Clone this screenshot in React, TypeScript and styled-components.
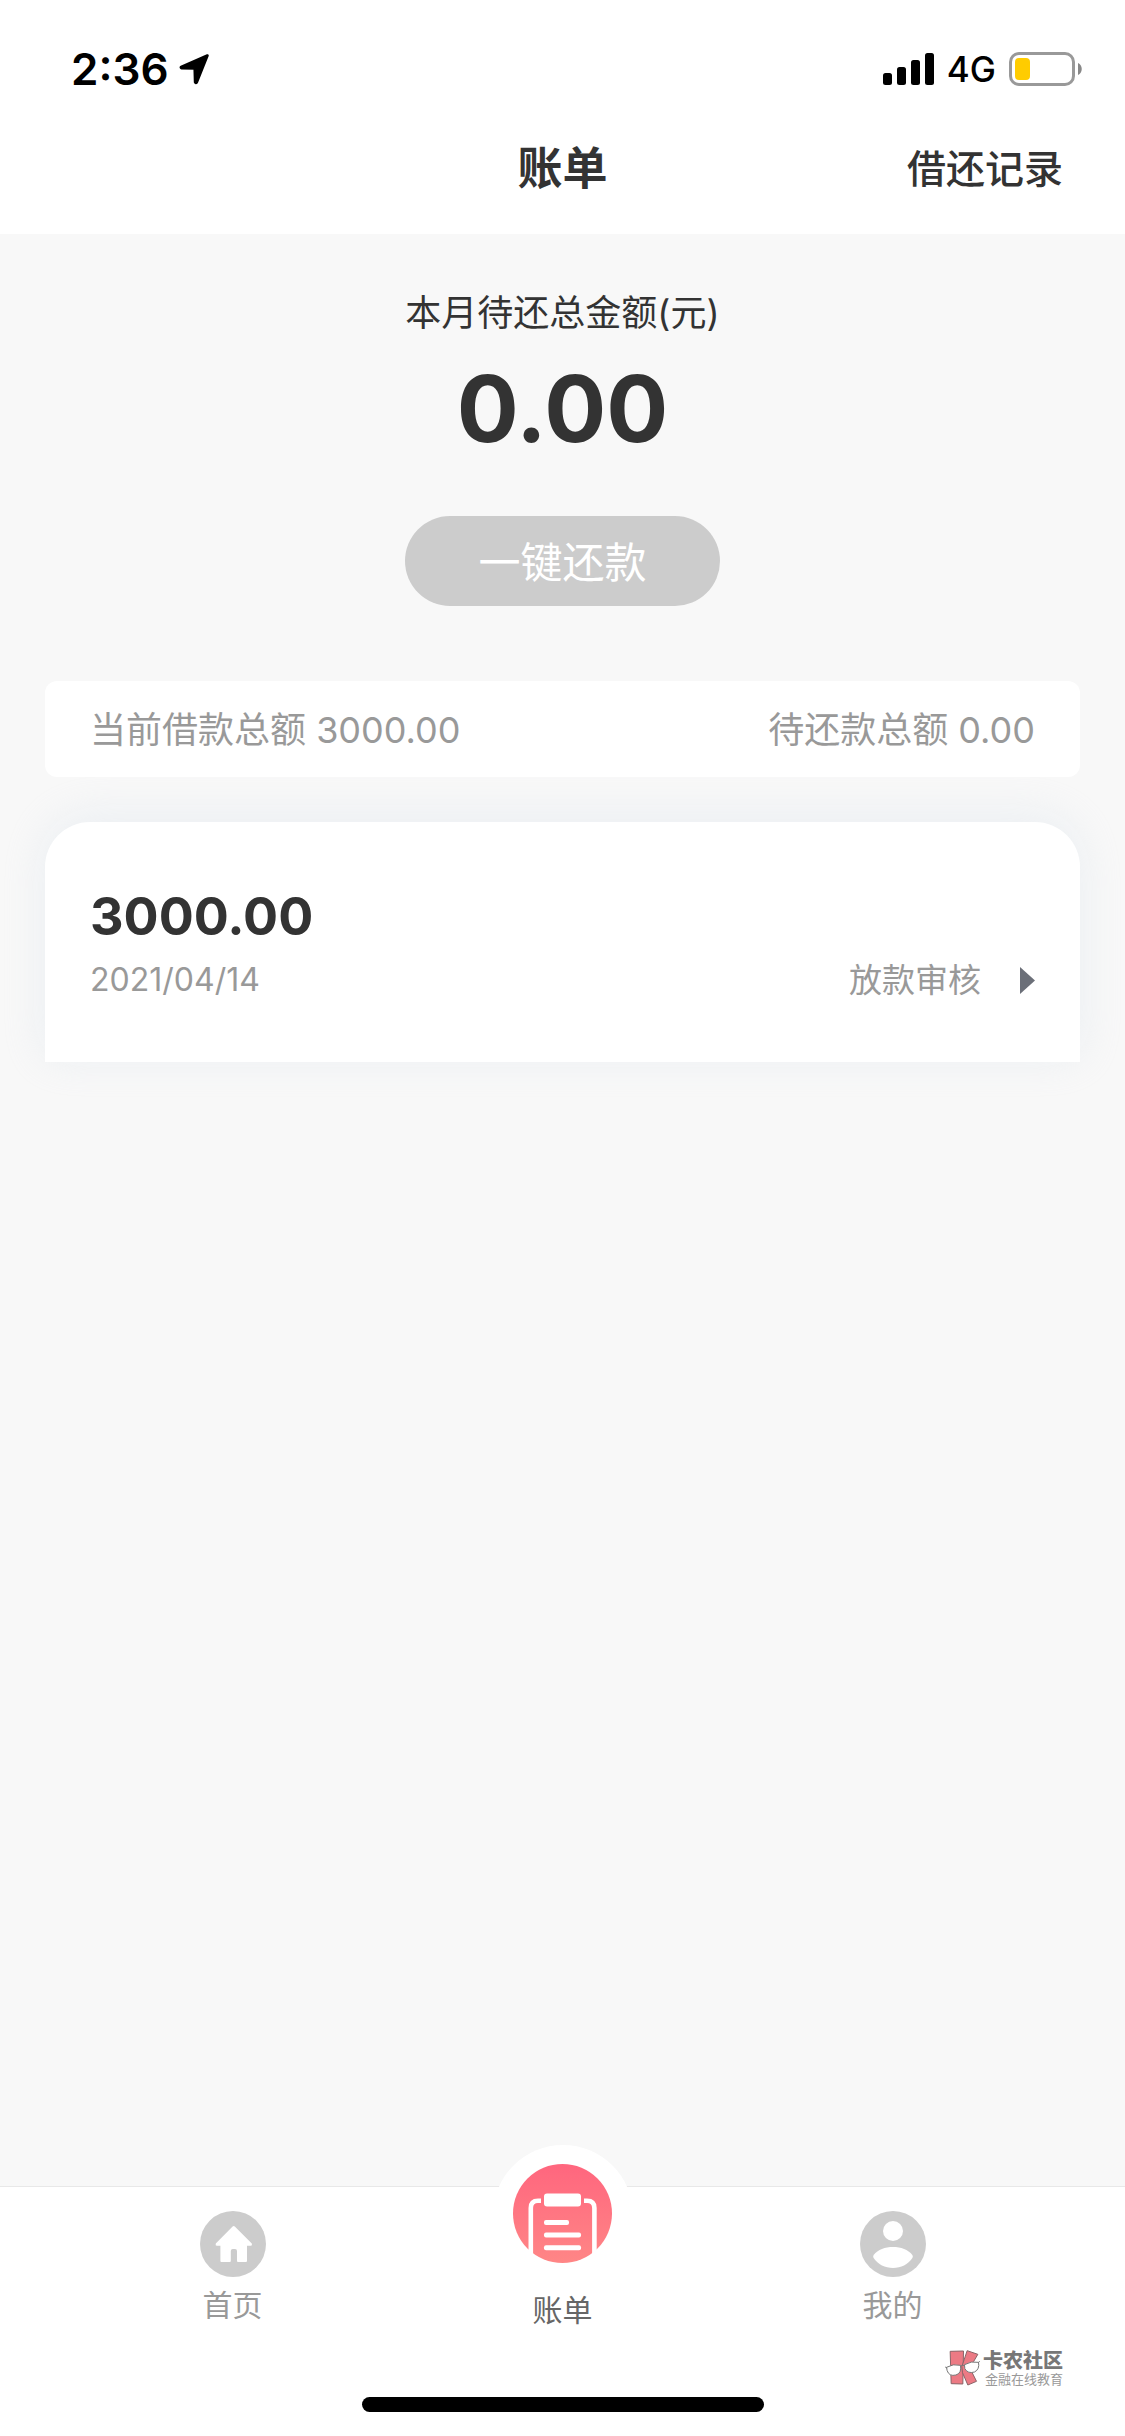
import React from "react";
import styled, { createGlobalStyle } from "styled-components";

const GlobalStyle = createGlobalStyle`
  *, *::before, *::after { box-sizing: border-box; }
  body {
    margin: 0;
    background: #f8f8f8;
    color: #333;
    font-family: Inter, "Noto Sans CJK SC", sans-serif;
  }
  h1, p { margin: 0; }
  a { color: inherit; text-decoration: none; }
`;

const Screen = styled.div`
  position: relative;
  display: flex;
  flex-direction: column;
  min-height: 100vh;
  overflow: hidden;
`;

const Header = styled.header`
  background: #fff;
`;

const StatusBar = styled.div`
  display: flex;
  align-items: center;
  justify-content: space-between;
  height: 138px;
  padding: 0 42px 0 71px;
  color: #000;
`;

const StatusGroup = styled.div<{ $gap: number }>`
  display: flex;
  align-items: center;
  gap: ${(p) => p.$gap}px;
`;

const Clock = styled.time`
  font-size: 44px;
  font-weight: 600;
  line-height: 60px;
`;

const Network = styled.span`
  font-size: 35px;
  font-weight: 500;
  line-height: 48px;
`;

const TitleBar = styled.div`
  display: grid;
  grid-template-columns: 1fr auto 1fr;
  align-items: center;
  padding: 1px 62px 35px;
`;

const Title = styled.h1`
  grid-column: 2;
  font-size: 45px;
  font-weight: 600;
  line-height: 60px;
`;

const RecordsLink = styled.a`
  justify-self: end;
  font-size: 39px;
  font-weight: 500;
  line-height: 60px;
`;

const Main = styled.main`
  flex: 1;
  padding: 55px 45px 0;
`;

const Due = styled.section`
  display: flex;
  flex-direction: column;
  align-items: center;
`;

const DueLabel = styled.p`
  font-size: 36px;
  line-height: 48px;
`;

const DueAmount = styled.p`
  margin-top: 24px;
  font-size: 92px;
  font-weight: 700;
  line-height: 96px;
`;

const RepayButton = styled.button`
  width: 315px;
  height: 90px;
  margin-top: 59px;
  padding: 0 0 3px;
  border: 0;
  border-radius: 45px;
  background: #ccc;
  color: #fff;
  font: inherit;
  font-size: 42px;
`;

const Totals = styled.section`
  position: relative;
  z-index: 1;
  display: flex;
  justify-content: space-between;
  margin-top: 75px;
  padding: 25px 45px 23px;
  border-radius: 12px;
  background: #fff;
  color: #999;
  font-size: 36px;
  line-height: 48px;
`;

const LoanCard = styled.a`
  display: block;
  margin-top: 45px;
  padding: 65px 45px 58px;
  border-radius: 45px 45px 0 0;
  background: #fff;
  box-shadow: 0 -6px 45px rgba(214, 224, 236, 0.4);
`;

const LoanAmount = styled.p`
  font-size: 52px;
  font-weight: 700;
  line-height: 60px;
`;

const LoanMeta = styled.div`
  display: flex;
  align-items: center;
  justify-content: space-between;
  margin-top: 9px;
  color: #999;
  font-size: 33px;
  line-height: 48px;
`;

const LoanDate = styled.time`
  font-size: 32px;
`;

const LoanStatus = styled.span`
  display: flex;
  align-items: center;
  gap: 39px;
`;

const BottomBar = styled.footer`
  position: relative;
  display: flex;
  flex-direction: column;
  align-items: center;
  justify-content: space-between;
  height: 250px;
  padding-bottom: 24px;
  border-top: 1px solid #e8e8e8;
  background: #fff;
`;

const Tabs = styled.nav`
  display: grid;
  grid-template-columns: repeat(3, 1fr);
  width: 100%;
  padding: 0 6%;
`;

const Tab = styled.a`
  display: flex;
  flex-direction: column;
  align-items: center;
  gap: 10px;
  padding-top: 24px;
  color: #999;
  font-size: 30px;
  line-height: 36px;
`;

const ActiveTab = styled(Tab)`
  gap: 7px;
  margin-top: -42px;
  padding-top: 0;
  color: #666;
`;

const Bump = styled.span`
  display: flex;
  justify-content: center;
  width: 140px;
  height: 140px;
  padding-top: 19px;
  border-radius: 50%;
  background: #fff;
`;

const HomeIndicator = styled.div`
  width: 402px;
  height: 15px;
  border-radius: 8px;
  background: #000;
`;

const Watermark = styled.div`
  position: absolute;
  right: 62px;
  bottom: 50px;
  display: flex;
  align-items: center;
  gap: 3px;
`;

const WatermarkText = styled.div`
  display: flex;
  flex-direction: column;
  align-items: flex-end;
`;

const WatermarkName = styled.span`
  color: #777;
  font-size: 20px;
  font-weight: 900;
  line-height: 22px;
`;

const WatermarkSlogan = styled.span`
  color: #999;
  font-size: 13px;
  line-height: 14px;
`;

const LocationIcon = () => (
  <svg width="31" height="31" viewBox="0 0 31 31" aria-hidden="true">
    <path
      d="M28.4 1.6 L2.2 13 Q1.6 13.6 2.4 14 L15.8 14.4 L16.2 28.2 Q16.8 29.4 17.6 28.4 Z"
      fill="#000"
      stroke="#000"
      strokeWidth="2.8"
      strokeLinejoin="round"
    />
  </svg>
);

const SignalIcon = () => (
  <svg width="51" height="34" viewBox="0 0 51 34" aria-hidden="true">
    <rect x="0" y="21" width="9" height="12" rx="2.5" />
    <rect x="14" y="15" width="9" height="18" rx="2.5" />
    <rect x="28" y="8" width="9" height="25" rx="2.5" />
    <rect x="42" y="1" width="9" height="32" rx="2.5" />
  </svg>
);

const BatteryIcon = () => (
  <svg width="74" height="34" viewBox="0 0 74 34" aria-hidden="true">
    <rect x="1.5" y="1.5" width="63" height="31" rx="8.5" fill="none" stroke="#999" strokeWidth="3" />
    <rect x="6" y="6" width="15" height="22" rx="4" fill="#ffcc00" />
    <path d="M69 11 C74 13 74 21 69 23 Z" fill="#888" />
  </svg>
);

const CaretIcon = () => (
  <svg width="15" height="27" viewBox="0 0 15 27" aria-hidden="true">
    <path d="M0 0 L15 13.5 L0 27 Z" fill="#6b6f78" />
  </svg>
);

const HomeIcon = () => (
  <svg width="66" height="66" viewBox="0 0 66 66" aria-hidden="true">
    <circle cx="33" cy="33" r="33" fill="#ccc" />
    <path
      d="M32.6 15.6 Q33.7 14.6 34.8 15.6 L51.8 32.6 Q52.6 34.8 50.8 34.8 L47 34.8 L47 50 Q47 51 46 51 L38 51 Q37 51 37 50 L37 40 Q37 38 35 38 L32.8 38 Q30.8 38 30.8 40 L30.8 50 Q30.8 51 29.8 51 L21.4 51 Q20.4 51 20.4 50 L20.4 34.8 L16.8 34.8 Q15 34.8 15.8 32.6 Z"
      fill="#fff"
    />
  </svg>
);

const PersonIcon = () => (
  <svg width="66" height="66" viewBox="0 0 66 66" aria-hidden="true">
    <circle cx="33" cy="33" r="33" fill="#ccc" />
    <circle cx="33" cy="20" r="10" fill="#fff" />
    <path
      d="M13.6 44 C18 38.6 25 36 33 36 C41 36 48 38.6 52.4 44 Q53.2 45.5 52.4 47 C48 53.6 41 57 33 57 C25 57 18 53.6 13.6 47 Q12.8 45.5 13.6 44 Z"
      fill="#fff"
    />
  </svg>
);

const BillIcon = () => (
  <svg width="99" height="99" viewBox="0 0 99 99" aria-hidden="true">
    <defs>
      <linearGradient id="billFill" x1="0" y1="0" x2="0" y2="1">
        <stop offset="0" stopColor="#ff667e" />
        <stop offset="1" stopColor="#ff8686" />
      </linearGradient>
    </defs>
    <circle cx="49.5" cy="49.5" r="49.5" fill="url(#billFill)" />
    <g fill="none" stroke="#fff" strokeWidth="4.6">
      <path d="M28 36.8 H25 Q17.8 36.8 17.8 44 V99" />
      <path d="M71 36.8 H74 Q81.4 36.8 81.4 44 V99" />
    </g>
    <g fill="#fff">
      <rect x="31" y="29.5" width="37" height="13" rx="3" />
      <rect x="31" y="56" width="25" height="5" rx="2" />
      <rect x="31" y="68.6" width="37" height="5" rx="2" />
      <rect x="31" y="81.2" width="37" height="5" rx="2" />
    </g>
  </svg>
);

const CommunityLogo = () => (
  <svg width="35" height="36" viewBox="0 0 104 108" aria-hidden="true">
    <g fill="#ec7a84" stroke="#8a6468" strokeWidth="3" strokeLinejoin="round">
      <path d="M15 4 L55 3 L53 102 L18 101 Z" />
      <path d="M66 2 L98 13 L74 54 L94 94 L68 105 L52 68 L50 50 Z" />
    </g>
    <g fill="#fff" stroke="#777" strokeWidth="3">
      <path d="M4 52 Q24 40 46 46 Q50 70 32 75 Q12 80 6 62 Z" />
      <path d="M58 44 Q78 32 100 37 Q104 58 88 66 Q68 72 59 56 Z" />
      <path d="M46 49 Q52 43 58 47 M0 51 L6 54 M99 38 L104 34" fill="none" />
    </g>
  </svg>
);

export default function App() {
  return (
    <>
      <GlobalStyle />
      <Screen>
        <Header>
          <StatusBar>
            <StatusGroup $gap={10}>
              <Clock>2:36</Clock>
              <LocationIcon />
            </StatusGroup>
            <StatusGroup $gap={13}>
              <SignalIcon />
              <Network>4G</Network>
              <BatteryIcon />
            </StatusGroup>
          </StatusBar>
          <TitleBar>
            <Title>账单</Title>
            <RecordsLink href="#records">借还记录</RecordsLink>
          </TitleBar>
        </Header>

        <Main>
          <Due>
            <DueLabel>本月待还总金额(元)</DueLabel>
            <DueAmount>0.00</DueAmount>
            <RepayButton type="button">一键还款</RepayButton>
          </Due>
          <Totals>
            <span>当前借款总额 3000.00</span>
            <span>待还款总额 0.00</span>
          </Totals>
          <LoanCard href="#loan">
            <LoanAmount>3000.00</LoanAmount>
            <LoanMeta>
              <LoanDate dateTime="2021-04-14">2021/04/14</LoanDate>
              <LoanStatus>
                放款审核
                <CaretIcon />
              </LoanStatus>
            </LoanMeta>
          </LoanCard>
        </Main>

        <BottomBar>
          <Tabs>
            <Tab href="#home">
              <HomeIcon />
              首页
            </Tab>
            <ActiveTab href="#bill" aria-current="page">
              <Bump>
                <BillIcon />
              </Bump>
              账单
            </ActiveTab>
            <Tab href="#mine">
              <PersonIcon />
              我的
            </Tab>
          </Tabs>
          <HomeIndicator />
          <Watermark>
            <CommunityLogo />
            <WatermarkText>
              <WatermarkName>卡农社区</WatermarkName>
              <WatermarkSlogan>金融在线教育</WatermarkSlogan>
            </WatermarkText>
          </Watermark>
        </BottomBar>
      </Screen>
    </>
  );
}
